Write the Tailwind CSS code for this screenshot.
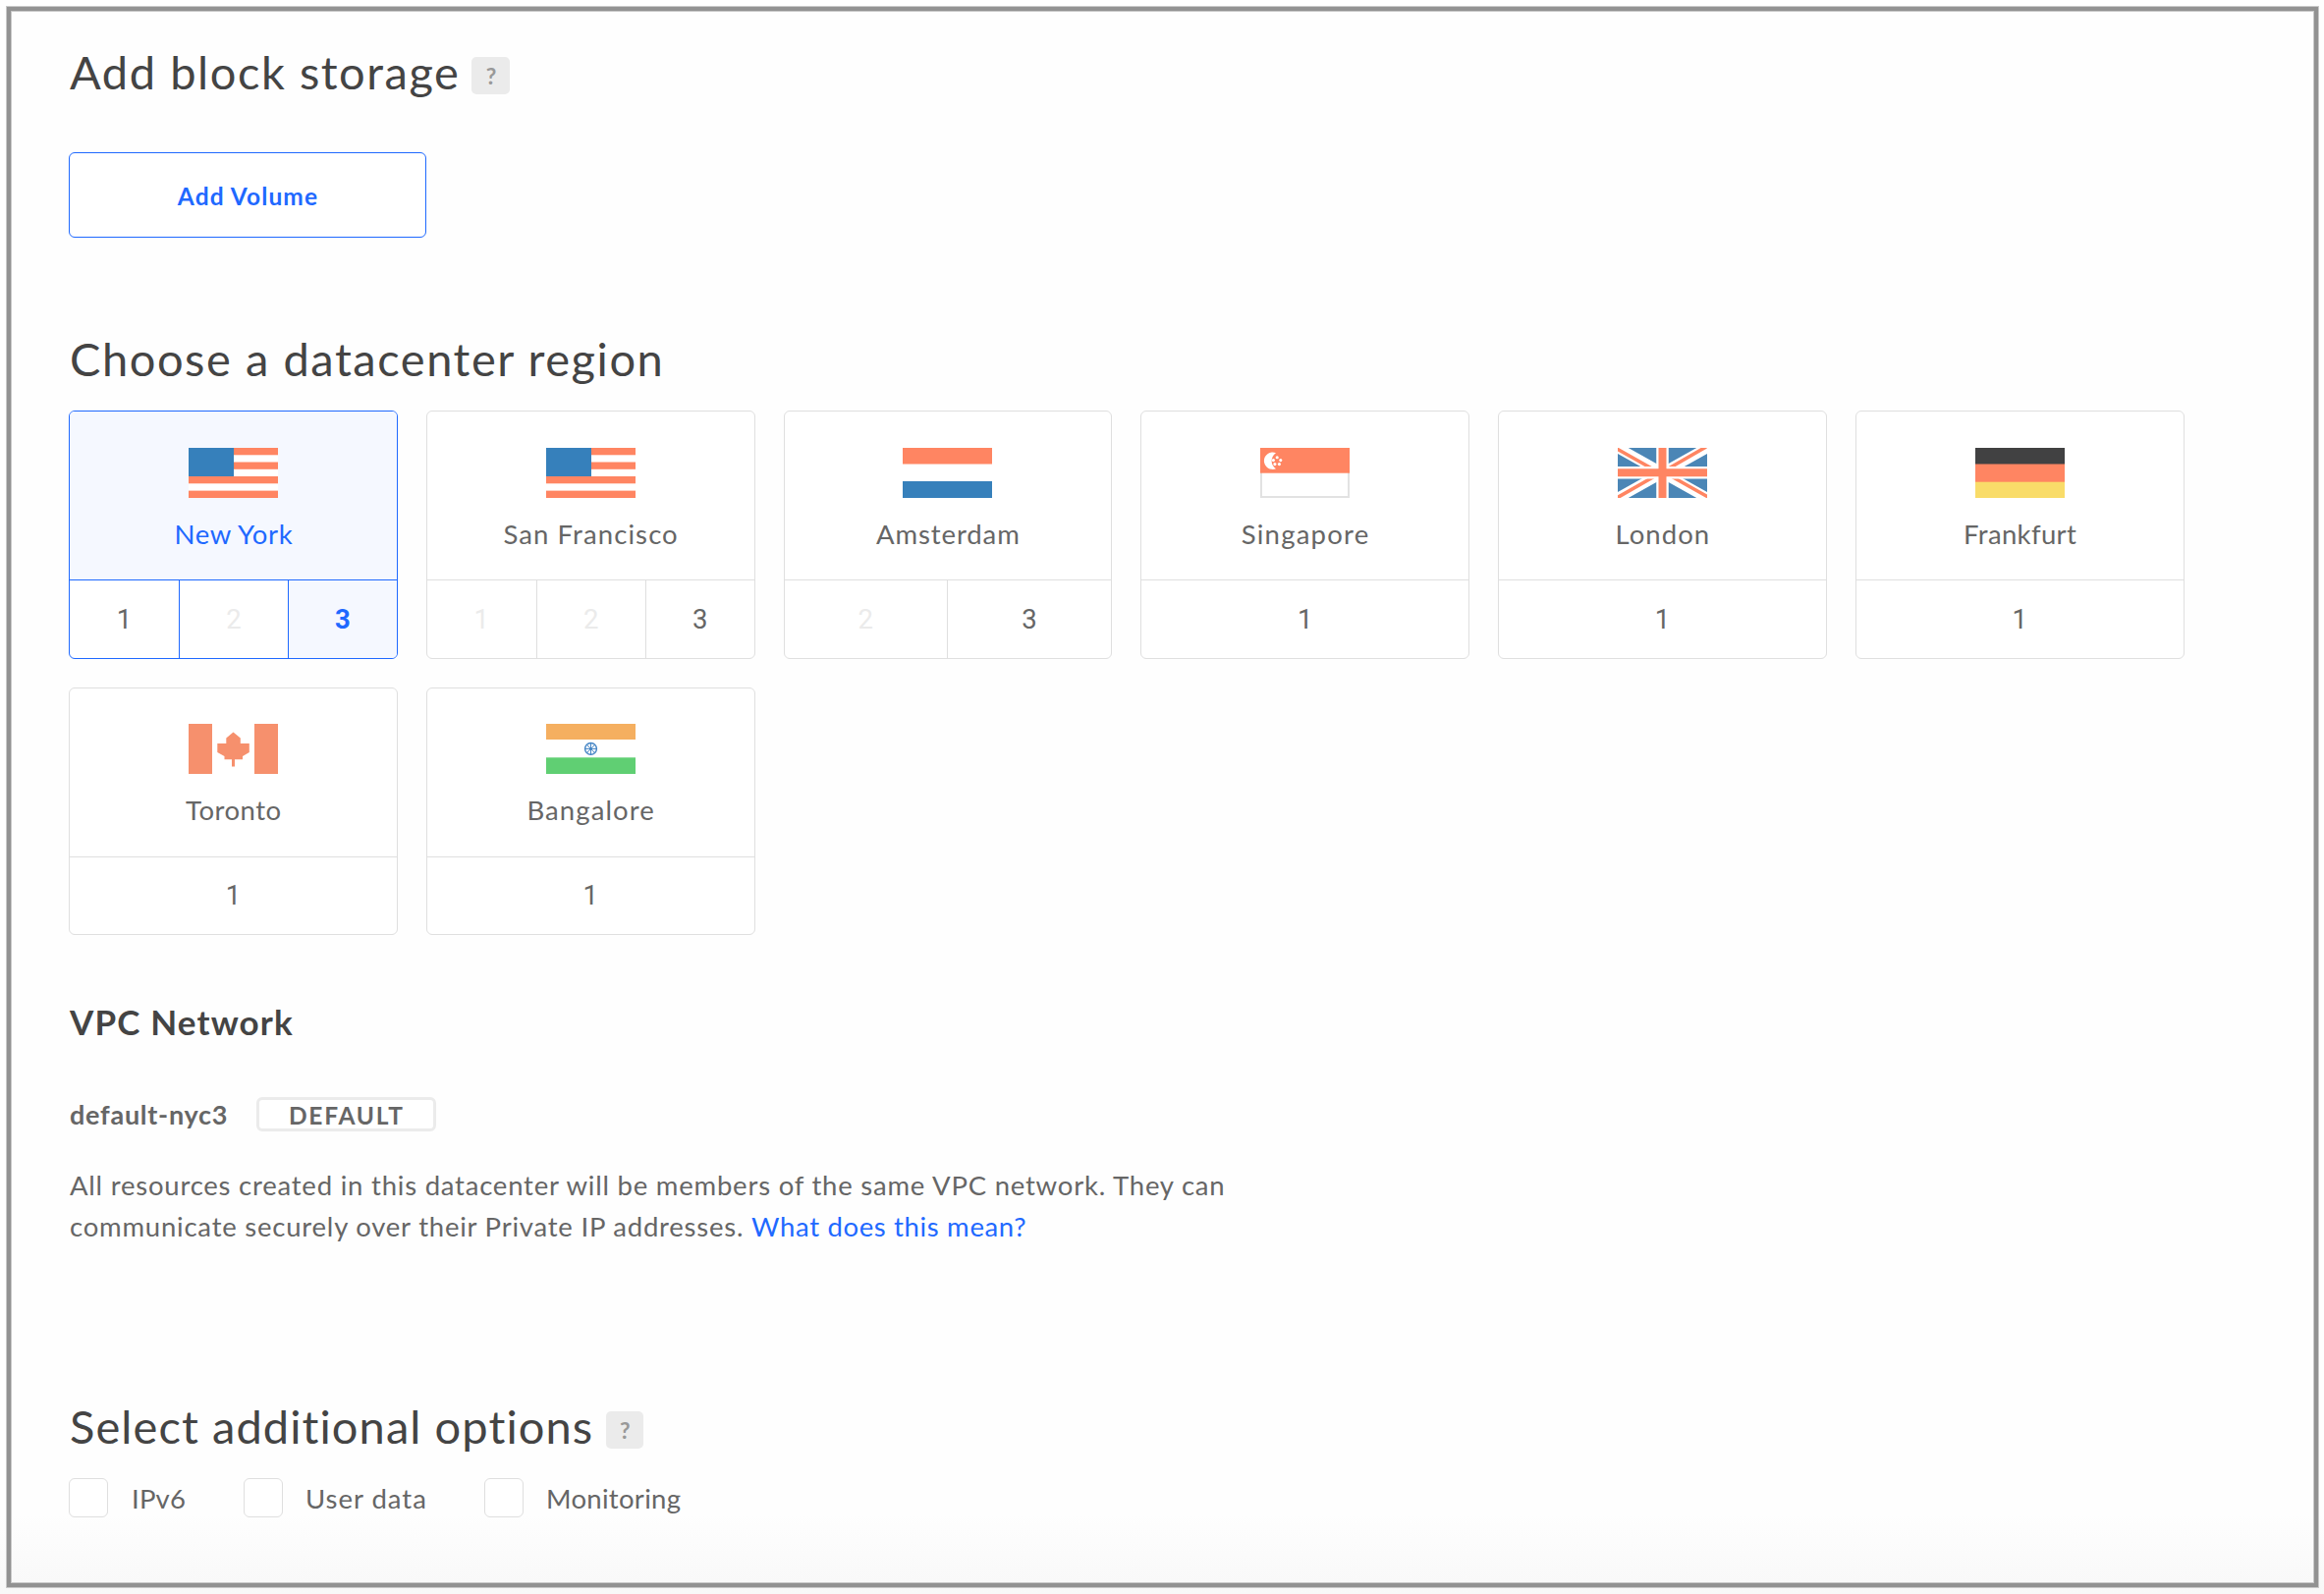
<!DOCTYPE html>
<html lang="en">
<head>
<meta charset="utf-8">
<title>Create Droplet</title>
<script src="https://cdn.jsdelivr.net/npm/@tailwindcss/browser@4"></script>
</head>
<body class="h-[1623px] overflow-hidden bg-linear-to-b from-[#fefefe] from-95% to-[#f8f8f8] p-[7px] font-['Lato',sans-serif] text-[#666]">

<svg class="hidden">
  <symbol id="flag-us" viewBox="0 0 91 51" preserveAspectRatio="none">
    <rect width="91" height="51" fill="#fff"/>
    <g fill="#ff8562"><rect width="91" height="7.3"/><rect y="14.5" width="91" height="7.3"/><rect y="29" width="91" height="7.3"/><rect y="43.6" width="91" height="7.4"/></g>
    <rect width="46" height="29" fill="#3680bb"/>
  </symbol>
</svg>

<main class="h-[1609px] w-[2353px] border-4 border-[#929292] pt-[34px] pl-[59px] ring-1 ring-[#c9c9c9] inset-ring-1 inset-ring-[#c9c9c9]">

  <section>
    <div class="flex h-14 items-center">
      <h2 class="pl-px text-[47px] leading-14 tracking-[1.55px] text-[#444]">Add block storage</h2>
      <span class="mt-[8px] ml-[12px] flex h-[38px] w-[39px] items-center justify-center rounded-[5px] bg-[#ebebeb] text-[23px] font-bold text-[#999]">?</span>
    </div>
    <button class="mt-[54px] block h-[87px] w-[364px] rounded-md border border-[#1f69ff] bg-white pt-[3px] pl-px text-[24.5px] font-bold tracking-[1.1px] text-[#1f69ff]">Add Volume</button>
  </section>

  <section class="mt-[95px]">
    <h2 class="pl-px text-[47px] leading-14 tracking-[1.55px] text-[#444]">Choose a datacenter region</h2>
    <div class="mt-[25px] grid w-[2153.5px] grid-cols-6 gap-x-[29px] gap-y-[29.3px] text-[27.5px]">

      <div class="flex h-[252.5px] flex-col overflow-hidden rounded-md border border-[#1f69ff] bg-white">
        <div class="flex h-[172px] flex-col items-center border-b border-[#1f69ff] bg-[#f5f8ff] pt-[37px]">
          <svg class="h-[51px] w-[91px]"><use href="#flag-us"/></svg>
          <span class="mt-[17px] pl-px leading-10 tracking-[.65px] text-[#1f69ff]">New York</span>
        </div>
        <div class="grid flex-1 grid-cols-[112px_111px_1fr] divide-x divide-[#1f69ff] font-['Roboto',sans-serif]">
          <span class="flex items-center justify-center">1</span>
          <span class="flex items-center justify-center text-[#ebebeb]">2</span>
          <span class="flex items-center justify-center bg-[#f5f8ff] font-bold text-[#1f69ff]">3</span>
        </div>
      </div>

      <div class="flex h-[252.5px] flex-col overflow-hidden rounded-md border border-[#dfdfdf] bg-white">
        <div class="flex h-[172px] flex-col items-center border-b border-[#dfdfdf] pt-[37px]">
          <svg class="h-[51px] w-[91px]"><use href="#flag-us"/></svg>
          <span class="mt-[17px] pl-px leading-10 tracking-[1.1px]">San Francisco</span>
        </div>
        <div class="grid flex-1 grid-cols-[112px_111px_1fr] divide-x divide-[#dfdfdf] font-['Roboto',sans-serif]">
          <span class="flex items-center justify-center text-[#ebebeb]">1</span>
          <span class="flex items-center justify-center text-[#ebebeb]">2</span>
          <span class="flex items-center justify-center">3</span>
        </div>
      </div>

      <div class="flex h-[252.5px] flex-col overflow-hidden rounded-md border border-[#dfdfdf] bg-white">
        <div class="flex h-[172px] flex-col items-center border-b border-[#dfdfdf] pt-[37px]">
          <svg class="h-[51px] w-[91px]" viewBox="0 0 91 51"><rect width="91" height="51" fill="#fff"/><rect width="91" height="16.5" fill="#ff8562"/><rect y="34" width="91" height="17" fill="#3680bb"/></svg>
          <span class="mt-[17px] pl-px leading-10 tracking-[.9px]">Amsterdam</span>
        </div>
        <div class="grid flex-1 grid-cols-2 divide-x divide-[#dfdfdf] font-['Roboto',sans-serif]">
          <span class="flex items-center justify-center text-[#ebebeb]">2</span>
          <span class="flex items-center justify-center">3</span>
        </div>
      </div>

      <div class="flex h-[252.5px] flex-col overflow-hidden rounded-md border border-[#dfdfdf] bg-white">
        <div class="flex h-[172px] flex-col items-center border-b border-[#dfdfdf] pt-[37px]">
          <svg class="h-[51px] w-[91px]" viewBox="0 0 91 51">
            <rect x="1" y="1" width="89" height="49" fill="#fff" stroke="#e2e2e2" stroke-width="2"/>
            <rect width="91" height="25.7" fill="#ff8562"/>
            <path d="M16 5.2A8.7 8.7 0 1 0 16 21.2A9.5 9.5 0 0 1 16 5.2Z" fill="#fff"/>
            <g fill="#fff"><circle cx="17.2" cy="9.8" r="1.55"/><circle cx="13.4" cy="12.6" r="1.55"/><circle cx="20.8" cy="12.6" r="1.55"/><circle cx="14.9" cy="16.6" r="1.55"/><circle cx="19.4" cy="16.6" r="1.55"/></g>
          </svg>
          <span class="mt-[17px] pl-px leading-10 tracking-[1.25px]">Singapore</span>
        </div>
        <div class="grid flex-1 font-['Roboto',sans-serif]"><span class="flex items-center justify-center">1</span></div>
      </div>

      <div class="flex h-[252.5px] flex-col overflow-hidden rounded-md border border-[#dfdfdf] bg-white">
        <div class="flex h-[172px] flex-col items-center border-b border-[#dfdfdf] pt-[37px]">
          <svg class="h-[51px] w-[91px]" viewBox="0 0 91 51">
            <rect width="91" height="51" fill="#4b86b6"/>
            <path d="M0 0L91 51M91 0L0 51" stroke="#fff" stroke-width="10.5"/>
            <path d="M-1 1L40 24M51 27L92 50M90 -1L50 22M41 27L-1 51" stroke="#ff8562" stroke-width="3.6"/>
            <path d="M45.5 0V51M0 25.3H91" stroke="#fff" stroke-width="12.5"/>
            <path d="M45.5 0V51M0 25.3H91" stroke="#ff8562" stroke-width="8"/>
          </svg>
          <span class="mt-[17px] pl-px leading-10 tracking-[1.05px]">London</span>
        </div>
        <div class="grid flex-1 font-['Roboto',sans-serif]"><span class="flex items-center justify-center">1</span></div>
      </div>

      <div class="flex h-[252.5px] flex-col overflow-hidden rounded-md border border-[#dfdfdf] bg-white">
        <div class="flex h-[172px] flex-col items-center border-b border-[#dfdfdf] pt-[37px]">
          <svg class="h-[51px] w-[91px]" viewBox="0 0 91 51"><rect width="91" height="17" fill="#414142"/><rect y="16.5" width="91" height="18.5" fill="#ff8562"/><rect y="34.7" width="91" height="16.3" fill="#f9dc69"/></svg>
          <span class="mt-[17px] pl-px leading-10 tracking-[.35px]">Frankfurt</span>
        </div>
        <div class="grid flex-1 font-['Roboto',sans-serif]"><span class="flex items-center justify-center">1</span></div>
      </div>

      <div class="flex h-[252.5px] flex-col overflow-hidden rounded-md border border-[#dfdfdf] bg-white">
        <div class="flex h-[172px] flex-col items-center border-b border-[#dfdfdf] pt-9">
          <svg class="h-[51px] w-[91px]" viewBox="0 0 91 51">
            <rect width="91" height="51" fill="#fff"/>
            <path d="M0 0H24V51H0ZM67 0H91V51H67ZM45.5 8.5L52.8 14.5V20H61.8V29L55 33V36.3H47V43.5H44V36.3H36.500V33L29.3 29V20H38.3V14.5Z" fill="#f6906d"/>
          </svg>
          <span class="mt-[17px] pl-px leading-10 tracking-[.5px]">Toronto</span>
        </div>
        <div class="grid flex-1 font-['Roboto',sans-serif]"><span class="flex items-center justify-center">1</span></div>
      </div>

      <div class="flex h-[252.5px] flex-col overflow-hidden rounded-md border border-[#dfdfdf] bg-white">
        <div class="flex h-[172px] flex-col items-center border-b border-[#dfdfdf] pt-9">
          <svg class="h-[51px] w-[91px]" viewBox="0 0 91 51">
            <rect width="91" height="51" fill="#fff"/><rect width="91" height="16" fill="#f5af60"/><rect y="34.3" width="91" height="16.7" fill="#60cf73"/>
            <g stroke="#4585c5" fill="none"><circle cx="45.5" cy="25.4" r="5.9" stroke-width="1.4"/><path d="M45.5 19.5V31.3M39.6 25.4H51.4M41.3 21.2L49.7 29.6M49.7 21.2L41.3 29.6" stroke-width="1"/></g>
            <circle cx="45.5" cy="25.4" r="1.3" fill="#4585c5"/>
          </svg>
          <span class="mt-[17px] pl-px leading-10 tracking-[1.1px]">Bangalore</span>
        </div>
        <div class="grid flex-1 font-['Roboto',sans-serif]"><span class="flex items-center justify-center">1</span></div>
      </div>
    </div>
  </section>

  <section class="mt-[66px] pl-px">
    <h3 class="text-[35px] leading-11 font-bold tracking-[1.15px] text-[#444]">VPC Network</h3>
    <div class="mt-[54px] flex h-9 items-center text-[27px]">
      <span class="pt-px font-bold tracking-[.75px]">default-nyc3</span>
      <span class="ml-[28.5px] flex h-[35px] w-[183px] items-center justify-center rounded-md border-3 border-[#ebebeb] bg-white pt-[5px] pl-px text-[24.5px] font-bold tracking-[1.8px]">DEFAULT</span>
    </div>
    <p class="mt-[34px] text-[27.5px] leading-[42px] tracking-[.78px]">All resources created in this datacenter will be members of the same VPC network. They can<br>communicate securely over their Private IP addresses. <a href="#" class="tracking-[.65px] text-[#1f69ff]">What does this mean?</a></p>
  </section>

  <section class="mt-[154px]">
    <div class="flex h-14 items-center">
      <h2 class="pl-px text-[47px] leading-14 tracking-[1.08px] text-[#444]">Select additional options</h2>
      <span class="mt-[8px] ml-[13px] flex h-[38px] w-[38px] items-center justify-center rounded-[5px] bg-[#ebebeb] text-[23px] font-bold text-[#999]">?</span>
    </div>
    <div class="mt-[25px] flex h-10 text-[27.5px] leading-[41px]">
      <label class="flex w-[178px] gap-6"><span class="size-10 rounded-md border border-[#dfdfdf] bg-white"></span><span class="tracking-[.2px]">IPv6</span></label>
      <label class="flex w-[245px] gap-[23px]"><span class="size-10 rounded-md border border-[#dfdfdf] bg-white"></span><span class="tracking-[1px]">User data</span></label>
      <label class="flex gap-[23px]"><span class="size-10 rounded-md border border-[#dfdfdf] bg-white"></span><span class="tracking-[.3px]">Monitoring</span></label>
    </div>
  </section>
</main>
</body>
</html>
